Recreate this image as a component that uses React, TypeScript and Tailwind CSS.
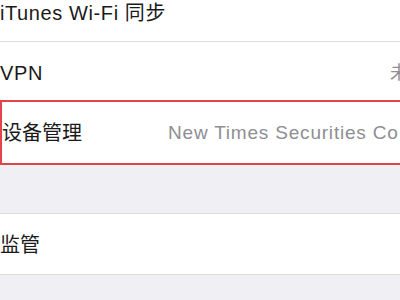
const font = {
  fontFamily: '"Liberation Sans", "Noto Sans CJK SC", sans-serif',
};

export default function App() {
  return (
    <div
      className="w-[400px] h-[300px] overflow-hidden bg-[#efeff4]"
      style={font}
    >
      <div className="w-[480px] flex flex-col">
        <div className="h-[42px] bg-white border-b border-[#dcdce0] flex items-start pt-[1px]">
          <span className="text-[20px] leading-6 tracking-[0.6px] text-[#1a1a1a]">iTunes Wi-Fi 同步</span>
        </div>
        <div className="h-[58px] bg-white flex items-center pt-[4px]">
          <span className="text-[20px] leading-6 tracking-[0.6px] text-[#1a1a1a]">VPN</span>
          <span className="ml-auto mr-[36px] text-[18px] leading-6 text-[#8e8e93]">未连接</span>
        </div>
        <div className="h-[65px] bg-white border-2 border-[#e3434b] flex items-center">
          <span className="text-[20px] leading-6 text-[#1a1a1a]">设备管理</span>
          <span className="ml-[86px] text-[19px] leading-6 tracking-[0.8px] text-[#8e8e93] whitespace-nowrap">
            New Times Securities Co., Ltd.
          </span>
        </div>
        <div className="h-[48px]" />
        <div className="h-[62px] bg-white border-y border-[#dcdce0] flex items-center pt-[1px]">
          <span className="text-[20px] leading-6 text-[#1a1a1a]">监管</span>
        </div>
      </div>
    </div>
  );
}
